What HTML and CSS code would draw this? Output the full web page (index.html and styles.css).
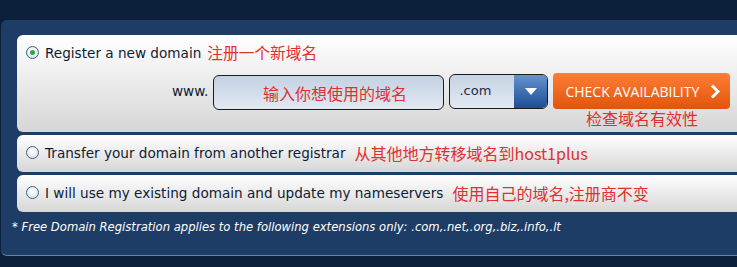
FILE: index.html
```html
<!DOCTYPE html>
<html>
<head>
<meta charset="utf-8">
<link rel="stylesheet" href="styles.css">
</head>
<body>
<div class="page">
  <div class="panel">
    <div class="box box-main">
      <div class="opt">
        <span class="radio checked"></span>
        <span class="label">Register a new domain</span>
        <span class="cn cn-tight">注册一个新域名</span>
      </div>
      <div class="search">
        <span class="www">www.</span>
        <div class="input"><span class="cn">输入你想使用的域名</span></div>
        <div class="select">
          <span class="sel-text">.com</span>
          <span class="sel-arrow"><svg width="12" height="7" viewBox="0 0 12 7"><path d="M0 0H12L6 7Z" fill="#fff"/></svg></span>
        </div>
        <div class="btn-col">
          <div class="btn">
            <span>CHECK AVAILABILITY</span>
            <svg width="10" height="15" viewBox="0 0 10 15"><path d="M2 1.5L8 7.5L2 13.5" fill="none" stroke="#fff" stroke-width="3"/></svg>
          </div>
          <span class="cn btn-note">检查域名有效性</span>
        </div>
      </div>
    </div>
    <div class="box box-row">
      <div class="opt">
        <span class="radio"></span>
        <span class="label">Transfer your domain from another registrar</span>
        <span class="cn">从其他地方转移域名到host1plus</span>
      </div>
    </div>
    <div class="box box-row">
      <div class="opt">
        <span class="radio"></span>
        <span class="label">I will use my existing domain and update my nameservers</span>
        <span class="cn">使用自己的域名,注册商不变</span>
      </div>
    </div>
    <p class="note">* Free Domain Registration applies to the following extensions only: .com,.net,.org,.biz,.info,.lt</p>
  </div>
</div>
</body>
</html>
```

FILE: styles.css
```css
html, body {
  margin: 0;
  padding: 0;
  background: #0c1f3b;
  overflow: hidden;
  height: 267px;
}
.page {
  padding: 20px 0 0 1px;
  width: 736px;
}
.panel {
  background: #1d3c66;
  border-radius: 6px 0 0 6px;
  border-bottom: 1px solid #6f8299;
  padding: 15px 0 0 16px;
  height: 220px;
  font-family: "DejaVu Sans", Verdana, sans-serif;
  color: #0d1c36;
}
.box {
  background: linear-gradient(#ffffff, #d6d6d6);
  border-radius: 6px 0 0 6px;
  margin-bottom: 3px;
  box-sizing: border-box;
}
.box-main {
  height: 97px;
  padding-top: 9px;
}
.box-row {
  height: 37px;
  padding-top: 9px;
}
.opt {
  display: flex;
  align-items: center;
  padding-left: 9px;
  height: 17px;
}
.radio {
  width: 11px;
  height: 11px;
  border: 1px solid #3d5f88;
  border-radius: 50%;
  background: radial-gradient(circle at 50% 40%, #ffffff, #d6dde6);
  box-sizing: content-box;
  display: flex;
  align-items: center;
  justify-content: center;
  flex: none;
}
.radio.checked::after {
  content: "";
  width: 5px;
  height: 5px;
  border-radius: 50%;
  background: #2fa93a;
}
.label {
  font-size: 13.6px;
  margin-left: 6px;
  white-space: nowrap;
}
.cn {
  font-family: "Noto Sans CJK SC", sans-serif;
  color: #e0302f;
  font-size: 16px;
  margin-left: 9px;
  white-space: nowrap;
}
.cn-tight {
  margin-left: 6px;
  font-size: 15.7px;
}
.search {
  display: flex;
  align-items: flex-start;
  margin-top: 12px;
  padding-left: 155px;
}
.www {
  font-size: 13.6px;
  margin-top: 10px;
  margin-right: 5px;
}
.input {
  width: 229px;
  height: 33px;
  border: 1px solid #1d1d1d;
  border-radius: 6px;
  background: linear-gradient(#c3d1e2, #e2e9f2);
  display: flex;
  align-items: center;
  justify-content: center;
  margin-top: 2px;
  box-sizing: content-box;
}
.input .cn {
  margin-left: 12px;
}
.select {
  width: 97px;
  height: 33px;
  border: 1px solid #1d1d1d;
  border-radius: 6px;
  background: linear-gradient(#c6d3e3, #e2e9f2);
  margin-left: 5px;
  margin-top: 1px;
  display: flex;
  overflow: hidden;
}
.sel-text {
  flex: 1;
  font-size: 13px;
  padding: 8px 0 0 9px;
  color: #1b2d4a;
}
.sel-arrow {
  width: 33px;
  background: linear-gradient(#6393cf, #1e4e93);
  display: flex;
  align-items: center;
  justify-content: center;
}
.btn-col {
  display: flex;
  flex-direction: column;
  align-items: center;
  margin-left: 5px;
}
.btn {
  width: 177px;
  height: 36px;
  border-radius: 4px;
  background: linear-gradient(#ff7d36, #e1550c);
  display: flex;
  align-items: center;
  box-sizing: border-box;
  padding-left: 12px;
  color: #fff;
  font-family: "Open Sans", sans-serif;
  font-size: 14px;
}
.btn span {
  flex: 1;
}
.btn svg {
  margin-right: 10px;
}
.btn-note {
  margin-left: 0;
  margin-top: 0;
  line-height: 18px;
}
.note {
  margin: 8px 0 0 -5px;
  color: #fff;
  font-style: italic;
  font-size: 11.6px;
  white-space: nowrap;
}
```
